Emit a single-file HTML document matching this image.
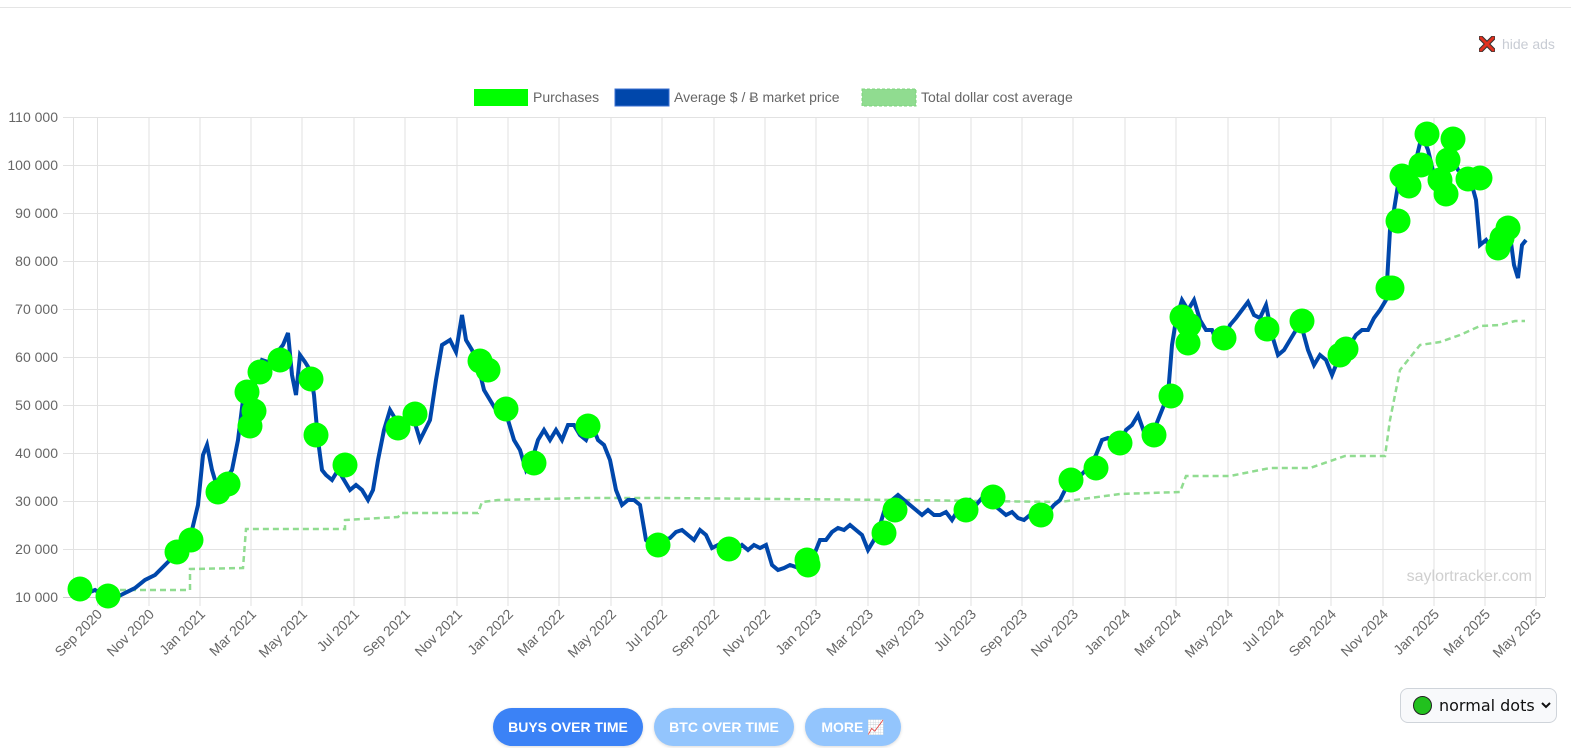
<!DOCTYPE html>
<html><head><meta charset="utf-8"><style>
body{margin:0;width:1571px;height:748px;background:#fff;overflow:hidden;font-family:"Liberation Sans",sans-serif;position:relative}
.btn{position:absolute;top:708px;height:38px;border-radius:19px;color:#fff;font-weight:bold;font-size:14px;line-height:38px;text-align:center;box-shadow:0 1px 3px rgba(0,0,0,.15)}
</style></head><body>
<div style="position:absolute;left:0;top:7px;width:1571px;height:1px;background:#e5e5e5"></div>
<svg style="position:absolute;left:1479px;top:36px" width="16" height="16"><path d="M2 2 L14 14 M14 2 L2 14" stroke="#333" stroke-width="5" stroke-linecap="round"/><path d="M2 2 L14 14 M14 2 L2 14" stroke="#e0301e" stroke-width="3" stroke-linecap="round"/></svg>
<div style="position:absolute;left:1502px;top:36px;color:#c8ccd4;font-size:14px">hide ads</div>
<svg width="1571" height="748" style="position:absolute;left:0;top:0" font-family="Liberation Sans, sans-serif">
<g font-size="14" fill="#666">
<rect x="474" y="89" width="54" height="17" fill="#00ff00"/>
<text x="533" y="102">Purchases</text>
<rect x="615" y="89" width="54" height="17" fill="#0047ab" stroke="#3a6fd0"/>
<text x="674" y="102">Average $ / Ƀ market price</text>
<rect x="862" y="89" width="54" height="17" fill="#90dc90" stroke="#7cd47c" stroke-dasharray="3,2"/>
<text x="921" y="102">Total dollar cost average</text>
</g>
<g stroke="#e2e2e2" stroke-width="1">
<line x1="63" y1="117.5" x2="1545" y2="117.5"/><line x1="63" y1="165.5" x2="1545" y2="165.5"/><line x1="63" y1="213.5" x2="1545" y2="213.5"/><line x1="63" y1="261.5" x2="1545" y2="261.5"/><line x1="63" y1="309.5" x2="1545" y2="309.5"/><line x1="63" y1="357.5" x2="1545" y2="357.5"/><line x1="63" y1="405.5" x2="1545" y2="405.5"/><line x1="63" y1="453.5" x2="1545" y2="453.5"/><line x1="63" y1="501.5" x2="1545" y2="501.5"/><line x1="63" y1="549.5" x2="1545" y2="549.5"/>
<line x1="73.5" y1="117" x2="73.5" y2="597"/><line x1="1545.5" y1="117" x2="1545.5" y2="597"/>
<line x1="97.5" y1="117" x2="97.5" y2="606"/><line x1="149" y1="117" x2="149" y2="606"/><line x1="200" y1="117" x2="200" y2="606"/><line x1="251" y1="117" x2="251" y2="606"/><line x1="302" y1="117" x2="302" y2="606"/><line x1="354" y1="117" x2="354" y2="606"/><line x1="405" y1="117" x2="405" y2="606"/><line x1="457" y1="117" x2="457" y2="606"/><line x1="508" y1="117" x2="508" y2="606"/><line x1="559" y1="117" x2="559" y2="606"/><line x1="611" y1="117" x2="611" y2="606"/><line x1="662" y1="117" x2="662" y2="606"/><line x1="714" y1="117" x2="714" y2="606"/><line x1="765" y1="117" x2="765" y2="606"/><line x1="816" y1="117" x2="816" y2="606"/><line x1="868" y1="117" x2="868" y2="606"/><line x1="919" y1="117" x2="919" y2="606"/><line x1="971" y1="117" x2="971" y2="606"/><line x1="1022" y1="117" x2="1022" y2="606"/><line x1="1073" y1="117" x2="1073" y2="606"/><line x1="1125" y1="117" x2="1125" y2="606"/><line x1="1176" y1="117" x2="1176" y2="606"/><line x1="1228" y1="117" x2="1228" y2="606"/><line x1="1279" y1="117" x2="1279" y2="606"/><line x1="1331" y1="117" x2="1331" y2="606"/><line x1="1383" y1="117" x2="1383" y2="606"/><line x1="1434" y1="117" x2="1434" y2="606"/><line x1="1485" y1="117" x2="1485" y2="606"/><line x1="1536" y1="117" x2="1536" y2="606"/>
</g>
<line x1="63" y1="597.5" x2="1545" y2="597.5" stroke="#cfcfcf"/>
<g font-size="14" fill="#666" text-anchor="end">
<text x="58" y="122">110 000</text><text x="58" y="170">100 000</text><text x="58" y="218">90 000</text><text x="58" y="266">80 000</text><text x="58" y="314">70 000</text><text x="58" y="362">60 000</text><text x="58" y="410">50 000</text><text x="58" y="458">40 000</text><text x="58" y="506">30 000</text><text x="58" y="554">20 000</text><text x="58" y="602">10 000</text>
</g>
<g font-size="14" fill="#666" text-anchor="end">
<text transform="translate(103,615) rotate(-45)">Sep 2020</text><text transform="translate(155,615) rotate(-45)">Nov 2020</text><text transform="translate(206,615) rotate(-45)">Jan 2021</text><text transform="translate(257,615) rotate(-45)">Mar 2021</text><text transform="translate(308,615) rotate(-45)">May 2021</text><text transform="translate(360,615) rotate(-45)">Jul 2021</text><text transform="translate(411,615) rotate(-45)">Sep 2021</text><text transform="translate(463,615) rotate(-45)">Nov 2021</text><text transform="translate(514,615) rotate(-45)">Jan 2022</text><text transform="translate(565,615) rotate(-45)">Mar 2022</text><text transform="translate(617,615) rotate(-45)">May 2022</text><text transform="translate(668,615) rotate(-45)">Jul 2022</text><text transform="translate(720,615) rotate(-45)">Sep 2022</text><text transform="translate(771,615) rotate(-45)">Nov 2022</text><text transform="translate(822,615) rotate(-45)">Jan 2023</text><text transform="translate(874,615) rotate(-45)">Mar 2023</text><text transform="translate(925,615) rotate(-45)">May 2023</text><text transform="translate(977,615) rotate(-45)">Jul 2023</text><text transform="translate(1028,615) rotate(-45)">Sep 2023</text><text transform="translate(1079,615) rotate(-45)">Nov 2023</text><text transform="translate(1131,615) rotate(-45)">Jan 2024</text><text transform="translate(1182,615) rotate(-45)">Mar 2024</text><text transform="translate(1234,615) rotate(-45)">May 2024</text><text transform="translate(1285,615) rotate(-45)">Jul 2024</text><text transform="translate(1337,615) rotate(-45)">Sep 2024</text><text transform="translate(1389,615) rotate(-45)">Nov 2024</text><text transform="translate(1440,615) rotate(-45)">Jan 2025</text><text transform="translate(1491,615) rotate(-45)">Mar 2025</text><text transform="translate(1542,615) rotate(-45)">May 2025</text>
</g>
<text x="1532" y="581" font-size="16" fill="#cfcfcf" text-anchor="end">saylortracker.com</text>
<polyline fill="none" stroke="#90dc90" stroke-width="2.5" stroke-dasharray="6,4" points="80,590 190,590 190,569 243,568 246,529 345,529 345,520 398,517 402,513 478,513 482,502 498,500 585,498 660,498 900,500 1060,502 1120,494 1180,492 1186,476 1230,476 1270,468 1310,468 1345,456 1385,456 1390,420 1400,370 1420,345 1440,342 1460,335 1480,326 1500,325 1515,321 1525,321"/>
<polyline fill="none" stroke="#0047ab" stroke-width="4" stroke-linejoin="miter" points="85,594 95,590 105,596 115,598 125,593 135,588 145,580 155,575 165,565 175,555 185,540 192,530 198,505 203,455 207,445 212,470 218,490 225,480 232,470 238,440 243,400 248,385 252,410 256,375 262,360 268,362 275,355 283,345 288,333 292,375 296,395 300,355 305,362 310,370 314,395 318,440 322,470 326,475 332,480 338,470 344,480 350,490 356,485 362,490 368,500 373,490 378,460 384,430 390,410 396,420 402,430 408,410 414,420 420,440 425,430 430,420 436,380 442,345 450,340 456,352 462,315 466,340 472,350 478,365 484,390 490,400 496,410 502,405 508,420 514,440 520,450 526,470 532,460 538,440 544,430 550,440 556,430 562,440 568,425 574,425 580,435 586,440 592,425 598,440 604,445 610,460 616,490 622,505 628,500 634,500 640,505 646,540 652,545 658,545 664,540 670,538 676,532 682,530 688,535 694,540 700,530 706,535 712,548 718,545 724,550 730,548 736,550 742,545 748,550 754,545 760,548 766,545 772,565 778,570 784,568 790,565 796,567 802,560 808,562 814,555 820,540 826,540 832,532 838,528 844,530 850,525 856,530 862,535 868,550 874,540 880,525 886,505 892,500 898,495 904,500 910,505 916,510 922,515 928,510 934,515 940,515 946,512 952,520 958,510 964,505 970,500 976,505 982,498 988,500 994,505 1000,510 1006,515 1012,512 1018,518 1024,520 1030,515 1036,518 1042,515 1048,512 1054,505 1060,500 1066,488 1072,480 1078,478 1084,472 1090,465 1096,455 1102,440 1108,438 1114,440 1120,445 1126,430 1132,425 1138,415 1144,432 1150,435 1156,425 1162,410 1168,395 1172,345 1176,320 1182,300 1188,310 1194,300 1200,320 1206,330 1212,330 1218,345 1224,340 1230,325 1236,318 1242,310 1248,302 1254,315 1260,318 1266,305 1272,335 1278,355 1284,350 1290,340 1296,330 1302,328 1308,350 1314,365 1320,355 1326,360 1332,375 1338,360 1344,350 1350,345 1356,335 1362,330 1368,330 1374,318 1380,310 1386,300 1390,230 1394,210 1398,185 1404,175 1410,175 1416,160 1422,135 1428,150 1434,175 1440,195 1446,180 1452,155 1458,170 1464,175 1470,178 1476,200 1480,245 1486,240 1492,250 1498,245 1504,240 1510,235 1514,265 1518,278 1522,245 1526,240"/>
<g fill="#00ff00">
<circle cx="80" cy="589" r="12.5"/><circle cx="108" cy="596" r="12.5"/><circle cx="177" cy="552" r="12.5"/><circle cx="191" cy="540" r="12.5"/><circle cx="218" cy="492" r="12.5"/><circle cx="228" cy="484" r="12.5"/><circle cx="250" cy="426" r="12.5"/><circle cx="247" cy="392" r="12.5"/><circle cx="254" cy="411" r="12.5"/><circle cx="260" cy="372" r="12.5"/><circle cx="280" cy="360" r="12.5"/><circle cx="311" cy="379" r="12.5"/><circle cx="316" cy="435" r="12.5"/><circle cx="345" cy="465" r="12.5"/><circle cx="398" cy="428" r="12.5"/><circle cx="415" cy="414" r="12.5"/><circle cx="480" cy="361" r="12.5"/><circle cx="488" cy="370" r="12.5"/><circle cx="506" cy="409" r="12.5"/><circle cx="534" cy="463" r="12.5"/><circle cx="588" cy="426" r="12.5"/><circle cx="658" cy="545" r="12.5"/><circle cx="729" cy="549" r="12.5"/><circle cx="807" cy="560" r="12.5"/><circle cx="808" cy="565" r="12.5"/><circle cx="884" cy="533" r="12.5"/><circle cx="895" cy="510" r="12.5"/><circle cx="966" cy="510" r="12.5"/><circle cx="993" cy="497" r="12.5"/><circle cx="1041" cy="515" r="12.5"/><circle cx="1071" cy="480" r="12.5"/><circle cx="1096" cy="468" r="12.5"/><circle cx="1120" cy="443" r="12.5"/><circle cx="1154" cy="435" r="12.5"/><circle cx="1171" cy="396" r="12.5"/><circle cx="1182" cy="317" r="12.5"/><circle cx="1189" cy="325" r="12.5"/><circle cx="1188" cy="343" r="12.5"/><circle cx="1224" cy="338" r="12.5"/><circle cx="1267" cy="329" r="12.5"/><circle cx="1302" cy="321" r="12.5"/><circle cx="1340" cy="355" r="12.5"/><circle cx="1346" cy="349" r="12.5"/><circle cx="1388" cy="288" r="12.5"/><circle cx="1392" cy="288" r="12.5"/><circle cx="1398" cy="221" r="12.5"/><circle cx="1402" cy="176" r="12.5"/><circle cx="1409" cy="186" r="12.5"/><circle cx="1421" cy="165" r="12.5"/><circle cx="1427" cy="134" r="12.5"/><circle cx="1440" cy="180" r="12.5"/><circle cx="1446" cy="194" r="12.5"/><circle cx="1448" cy="160" r="12.5"/><circle cx="1453" cy="139" r="12.5"/><circle cx="1468" cy="179" r="12.5"/><circle cx="1480" cy="178" r="12.5"/><circle cx="1498" cy="248" r="12.5"/><circle cx="1502" cy="238" r="12.5"/><circle cx="1508" cy="228" r="12.5"/>
</g>
</svg>
<div class="btn" style="left:493px;width:150px;background:#3b82f6">BUYS OVER TIME</div>
<div class="btn" style="left:654px;width:140px;background:#93c5fd">BTC OVER TIME</div>
<div class="btn" style="left:805px;width:96px;background:#93c5fd">MORE 📈</div>
<div style="position:absolute;left:1400px;top:688px;width:155px;height:33px;border:1px solid #cfd4da;border-radius:8px;background:#f8f9fb">
<div style="position:absolute;left:12px;top:7px;width:17px;height:17px;border-radius:50%;background:#22c11e;border:1px solid #222"></div>
<div style="position:absolute;left:38px;top:7px;color:#111;font-family:'DejaVu Sans',sans-serif;font-size:16px">normal dots</div>
<svg style="position:absolute;left:140px;top:13px" width="10" height="7"><path d="M1 1 L5 5 L9 1" fill="none" stroke="#111" stroke-width="2"/></svg>
</div>
</body></html>
